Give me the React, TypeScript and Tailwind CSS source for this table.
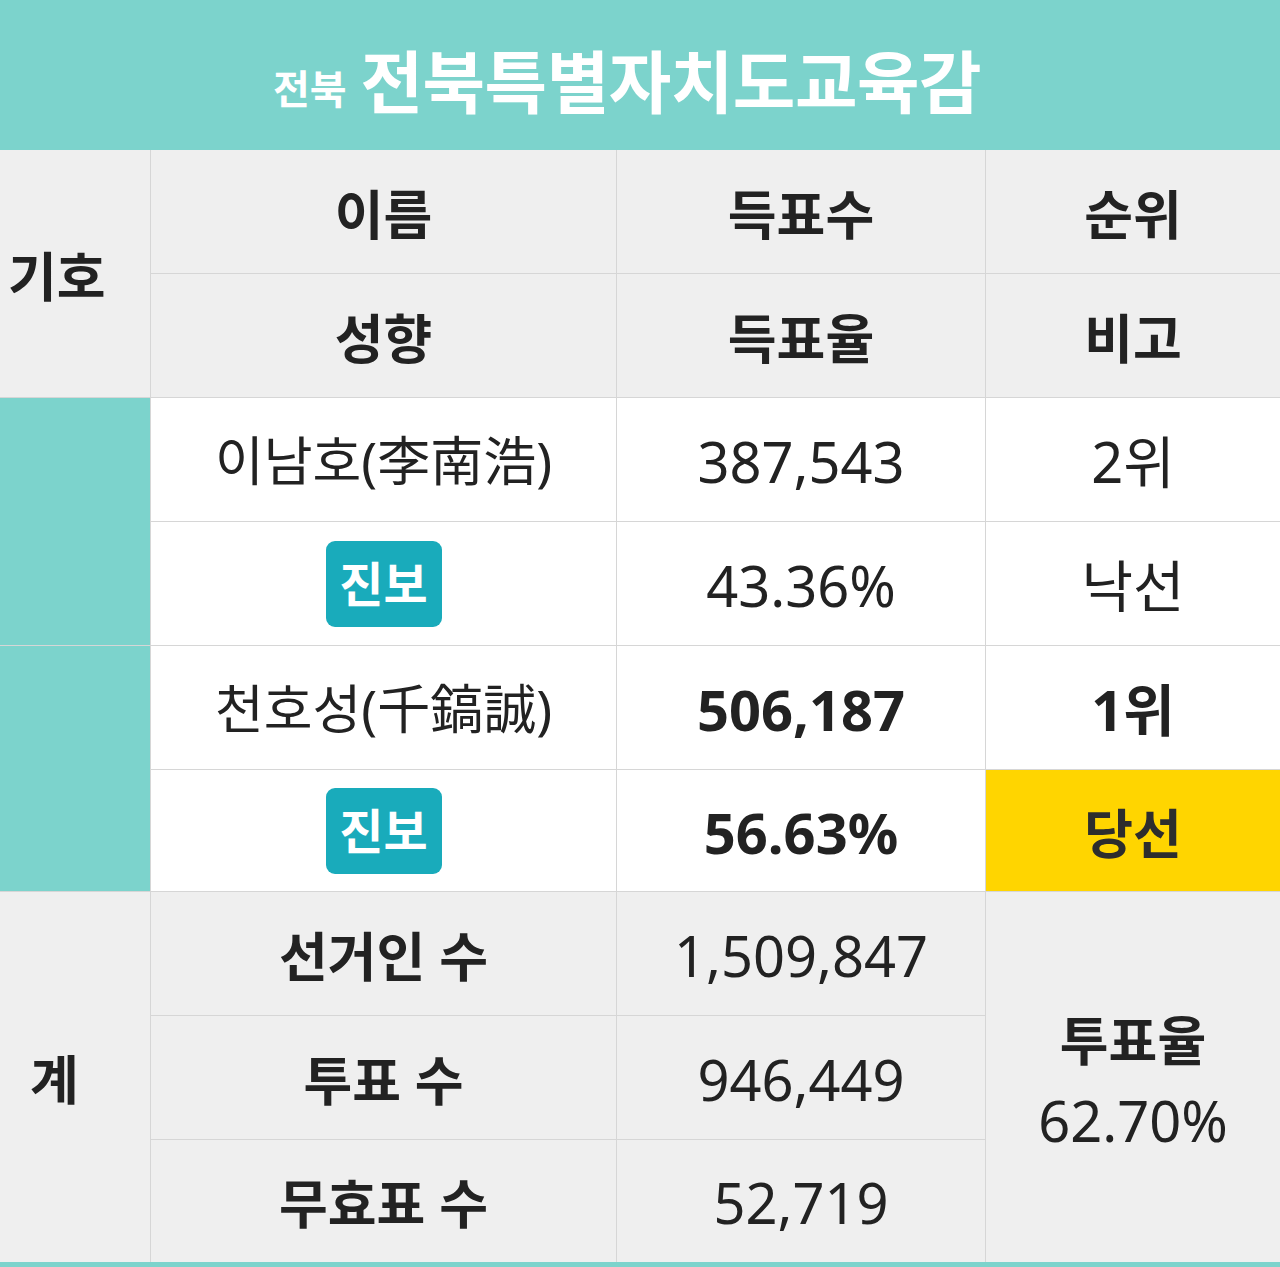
const font = { fontFamily: '"Noto Sans", "Noto Sans CJK KR", sans-serif' }

function Badge() {
  return (
    <div className="flex h-[86px] w-[116px] items-center justify-center rounded-[9px] bg-[#19abbb] text-[48px] font-bold text-white">
      진보
    </div>
  )
}

export default function App() {
  const cell = "flex items-center justify-center"
  const head = `${cell} bg-[#efefef] pt-[6px] text-[53px] font-bold text-[#222]`
  const val = `${cell} bg-white pt-[2px] text-[56px] text-[#222]`
  const name = `${cell} bg-white pt-[2px] text-[53px] text-[#222]`
  const num = `${cell} bg-[#efefef] pt-[2px] text-[56px] text-[#222]`
  return (
    <div className="w-[1280px] bg-white" style={font}>
      <div className="flex h-[150px] items-center justify-center gap-[14px] bg-[#7cd3cc] pt-[14px] pr-[26px] text-white">
        <span className="mt-[14px] text-[40px] font-bold">전북</span>
        <span className="text-[68px] font-bold tracking-[-0.5px]">전북특별자치도교육감</span>
      </div>

      <div className="grid grid-cols-[150px_465px_368px_294px] grid-rows-[123px_123px_123px_123px_123px_121px_123px_123px_122px] gap-px bg-[#d6d6d6]">
        <div className={`${head} row-span-2 justify-start pl-[8px]`}>기호</div>
        <div className={head}>이름</div>
        <div className={head}>득표수</div>
        <div className={head}>순위</div>
        <div className={head}>성향</div>
        <div className={head}>득표율</div>
        <div className={head}>비고</div>

        <div className="row-span-2 bg-[#7cd3cc]" />
        <div className={name}>이남호(李南浩)</div>
        <div className={val}>387,543</div>
        <div className={val}>2위</div>
        <div className={`${cell} bg-white`}><Badge /></div>
        <div className={val}>43.36%</div>
        <div className={val}>낙선</div>

        <div className="row-span-2 bg-[#7cd3cc]" />
        <div className={name}>천호성(千鎬誠)</div>
        <div className={`${val} font-bold`}>506,187</div>
        <div className={`${val} font-bold`}>1위</div>
        <div className={`${cell} bg-white`}><Badge /></div>
        <div className={`${val} font-bold`}>56.63%</div>
        <div className={`${cell} bg-[#ffd500] pt-[6px] text-[53px] font-bold text-[#2d2d2d]`}>당선</div>

        <div className={`${head} row-span-3 justify-start pl-[30px]`}>계</div>
        <div className={head}>선거인 수</div>
        <div className={num}>1,509,847</div>
        <div className="row-span-3 flex flex-col items-center justify-center gap-[8px] bg-[#efefef] pt-[10px] text-[#222]">
          <span className="text-[53px] leading-[1.3] font-bold">투표율</span>
          <span className="text-[56px] leading-[1.3]">62.70%</span>
        </div>
        <div className={head}>투표 수</div>
        <div className={num}>946,449</div>
        <div className={head}>무효표 수</div>
        <div className={num}>52,719</div>
      </div>
      <div className="h-[5px] bg-[#7cd3cc]" />
    </div>
  )
}
